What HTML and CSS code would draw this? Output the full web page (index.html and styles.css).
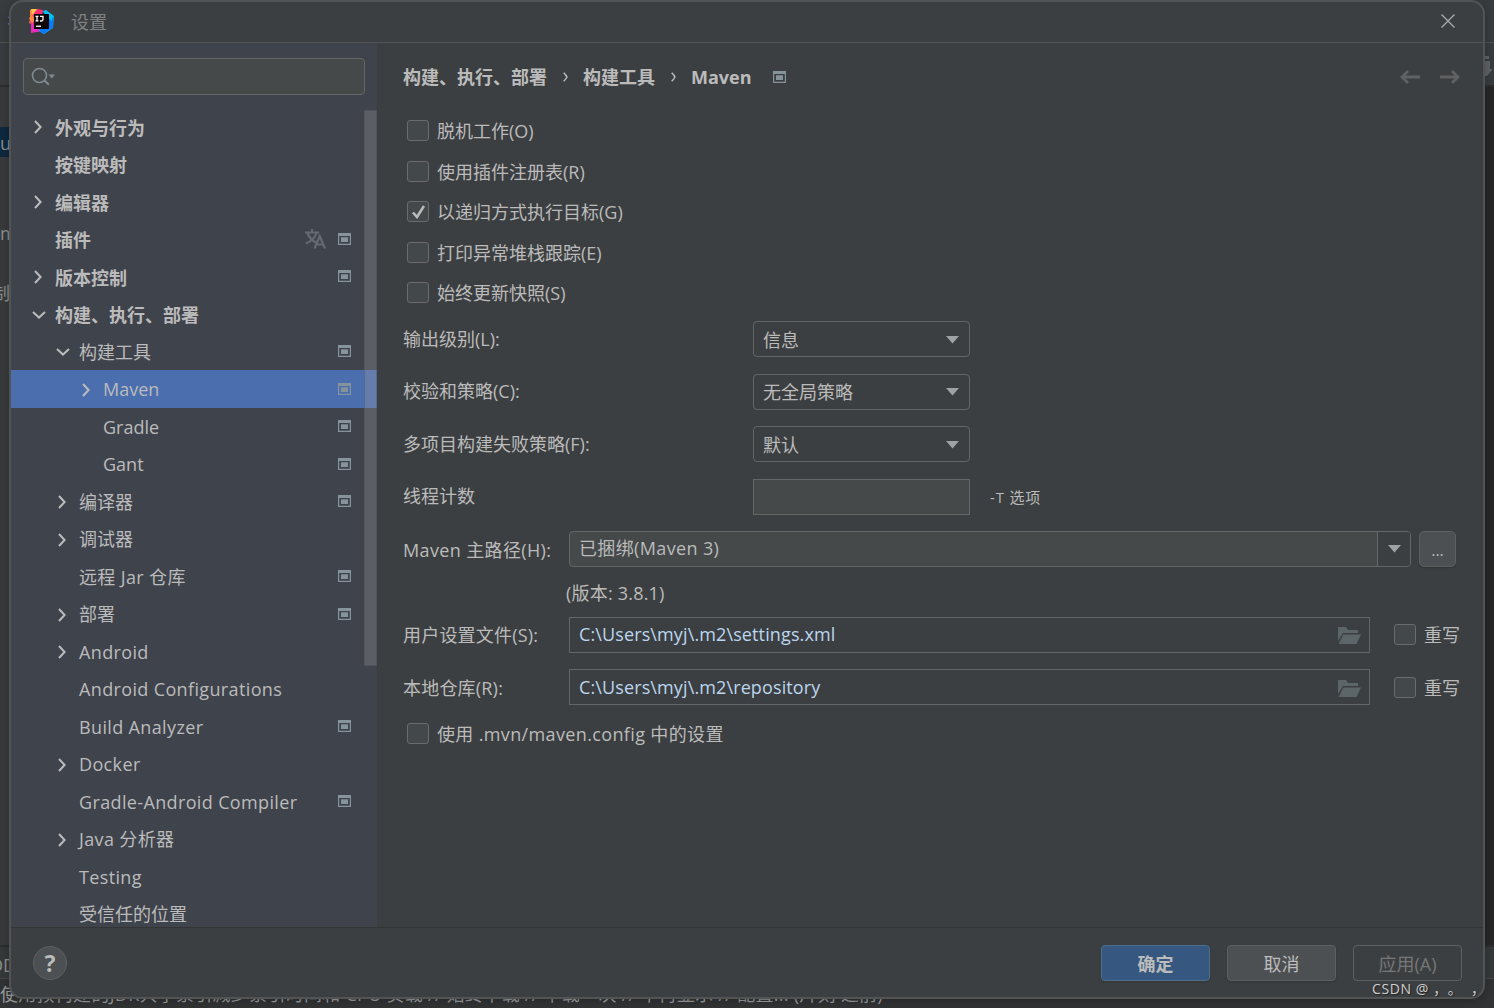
FILE: index.html
```html
<!DOCTYPE html>
<html lang="zh-CN">
<head>
    <meta charset="UTF-8">
    <meta name="viewport" content="width=device-width, initial-scale=1.0">
    <title>设置</title>
    <link rel="stylesheet" href="styles.css">
</head>
<body>

    <!-- Shared icons -->
    <svg class="sprite" width="0" height="0">
        <symbol id="i-right" viewBox="0 0 8 14"><path d="M1 1l5.600 6L1 13" fill="none" stroke="currentColor" stroke-width="2"/></symbol>
        <symbol id="i-down" viewBox="0 0 14 8"><path d="M1 1l6 5.600L13 1" fill="none" stroke="currentColor" stroke-width="2"/></symbol>
        <symbol id="i-project" viewBox="0 0 13 12"><path fill-rule="evenodd" d="M0 0h13v12H0zM1.200 3v7.800h10.600V3z"/><path d="M3 4.300h7V9H3z"/></symbol>
        <symbol id="i-arrow" viewBox="0 0 13 8"><path d="M0 0h13L6.500 7.500z"/></symbol>
        <symbol id="i-folder" viewBox="0 0 23 17"><path d="M0 14V0h8l2 3h10v3H5z"/><path d="M5.300 7.500H23L18.500 17H.6z"/></symbol>
        <symbol id="i-back" viewBox="0 0 20 14"><path d="M20 7H2M8 1L2 7l6 6" fill="none" stroke="currentColor" stroke-width="2.800"/></symbol>
    </svg>

    <!-- IDE window behind the dialog -->
    <div class="ide">
        <div class="ide-title"><span class="ide-link">视</span></div>
        <div class="ide-toolbar">
            <svg class="ide-tool" width="11" height="22"><path d="M2 0h5v3H2zM0 5h8v8h3l-6 7H0z"/></svg>
        </div>
        <div class="ide-main">
            <div class="ide-tree">
                <div class="ide-item ide-item-selected">u</div>
                <div class="ide-item">m</div>
                <div class="ide-item">制</div>
            </div>
            <div class="ide-editor"></div>
        </div>
        <div class="ide-tabs"><span>DD</span></div>
        <div class="ide-status">使用预构建的JDK共享索引减少索引时间和 CPU 负载 // 始终下载 // 下载一次 // 不再显示 // 配置... (片刻 之前)</div>
    </div>

    <div class="dialog">
        <div class="titlebar">
            <svg class="logo" width="25" height="25" viewBox="0 0 25 25">
                <path fill="#fc8a3d" d="M1 1l7-1 5 5-7 11-6-2 2-4-1-3z"/>
                <path fill="#fdc94f" d="M2 0h6l2 4-6 3z"/>
                <path fill="#fe2d76" d="M8 0l6 1-1 5-9 10-4-4 3-5z"/>
                <path fill="#fc8a3d" d="M0 9l3-3 3 4-3 5z"/>
                <path fill="#e62db8" d="M2 13l8 6 4 3-12 2z"/>
                <path fill="#08b8f4" d="M14 2l3-1 8 6-1 12-9 6-5-3 6-16z"/>
                <path fill="#087cfa" d="M20 7l4 2v10l-10 6-4-4z"/>
                <path fill="#07c3f2" d="M16 1l7 5v6l-6-5z"/>
                <path fill="#100609" d="M5 5h15v15H5z"/>
                <path fill="none" stroke="#fff" stroke-width="1.300" d="M6.500 7.300h3M8 7v5M6.500 11.900h3M11 7.300h3v3q0 1.700-1.700 1.700H11"/>
                <path fill="#ddd" d="M7 16.500h5v1.500H7z"/>
            </svg>
            <span class="title">设置</span>
            <svg class="close" width="14" height="14" viewBox="0 0 14 14"><path d="M.5.5l13 13M13.500.5l-13 13" fill="none" stroke="#a9abac" stroke-width="1.300"/></svg>
        </div>

        <div class="body">
            <div class="sidebar">
                <div class="search">
                    <svg width="25" height="19" viewBox="0 0 25 19"><circle cx="8.500" cy="8.500" r="7" fill="none" stroke="#7f8b91" stroke-width="1.600"/><path d="M13 13l4.800 4.800" stroke="#7f8b91" stroke-width="2"/><path d="M17.500 7.500H24l-3.200 4z" fill="#7f8b91"/></svg>
                </div>
                <div class="tree-wrap">
                    <div class="tree">
                        <div class="node bold"><i><svg class="right"><use href="#i-right"/></svg></i><span>外观与行为</span></div>
                        <div class="node bold"><i></i><span>按键映射</span></div>
                        <div class="node bold"><i><svg class="right"><use href="#i-right"/></svg></i><span>编辑器</span></div>
                        <div class="node bold"><i></i><span>插件</span>
                            <svg class="lang" width="21" height="20" viewBox="0 0 21 20"><path d="M0 3.500h14M7 0v3.500M2.500 4c1.500 4 4.500 7.500 8.500 9.500M11.500 4C10 8.500 6 12.500.8 14.500M9.500 19.500L14.700 7l5.300 12.500M11.200 15.500h7" fill="none" stroke="currentColor" stroke-width="2.200"/></svg>
                            <svg class="project"><use href="#i-project"/></svg></div>
                        <div class="node bold"><i><svg class="right"><use href="#i-right"/></svg></i><span>版本控制</span><svg class="project"><use href="#i-project"/></svg></div>
                        <div class="node bold"><i><svg class="down"><use href="#i-down"/></svg></i><span>构建、执行、部署</span></div>
                        <div class="node level2"><i><svg class="down"><use href="#i-down"/></svg></i><span>构建工具</span><svg class="project"><use href="#i-project"/></svg></div>
                        <div class="node level3 selected"><i><svg class="right"><use href="#i-right"/></svg></i><span>Maven</span><svg class="project"><use href="#i-project"/></svg></div>
                        <div class="node level3"><i></i><span>Gradle</span><svg class="project"><use href="#i-project"/></svg></div>
                        <div class="node level3"><i></i><span>Gant</span><svg class="project"><use href="#i-project"/></svg></div>
                        <div class="node level2"><i><svg class="right"><use href="#i-right"/></svg></i><span>编译器</span><svg class="project"><use href="#i-project"/></svg></div>
                        <div class="node level2"><i><svg class="right"><use href="#i-right"/></svg></i><span>调试器</span></div>
                        <div class="node level2"><i></i><span class="wide">远程 Jar 仓库</span><svg class="project"><use href="#i-project"/></svg></div>
                        <div class="node level2"><i><svg class="right"><use href="#i-right"/></svg></i><span>部署</span><svg class="project"><use href="#i-project"/></svg></div>
                        <div class="node level2"><i><svg class="right"><use href="#i-right"/></svg></i><span class="wide">Android</span></div>
                        <div class="node level2"><i></i><span class="wide">Android Configurations</span></div>
                        <div class="node level2"><i></i><span class="wide">Build Analyzer</span><svg class="project"><use href="#i-project"/></svg></div>
                        <div class="node level2"><i><svg class="right"><use href="#i-right"/></svg></i><span class="wide">Docker</span></div>
                        <div class="node level2"><i></i><span class="wide">Gradle-Android Compiler</span><svg class="project"><use href="#i-project"/></svg></div>
                        <div class="node level2"><i><svg class="right"><use href="#i-right"/></svg></i><span class="wide">Java 分析器</span></div>
                        <div class="node level2"><i></i><span class="wide">Testing</span></div>
                        <div class="node level2"><i></i><span>受信任的位置</span></div>
                    </div>
                    <div class="scrollbar"></div>
                </div>
            </div>

            <div class="content">
                <div class="breadcrumb">
                    <span>构建、执行、部署</span>
                    <svg class="sep" width="5" height="10" viewBox="0 0 5 10"><path d="M.7.7Q3 3 4 5 3 7 .7 9.300" fill="none" stroke="#bbb" stroke-width="1.500"/></svg>
                    <span>构建工具</span>
                    <svg class="sep" width="5" height="10" viewBox="0 0 5 10"><path d="M.7.7Q3 3 4 5 3 7 .7 9.300" fill="none" stroke="#bbb" stroke-width="1.500"/></svg>
                    <span class="crumb-last">Maven</span>
                    <svg class="project"><use href="#i-project"/></svg>
                    <div class="history">
                        <svg width="20" height="14"><use href="#i-back"/></svg>
                        <svg class="forward" width="20" height="14"><use href="#i-back"/></svg>
                    </div>
                </div>

                <div class="checks">
                    <label class="check"><b></b><span>脱机工作(O)</span></label>
                    <label class="check"><b></b><span>使用插件注册表(R)</span></label>
                    <label class="check"><b><svg width="13" height="14" viewBox="0 0 13 14"><path d="M1 7.500l4 4.500L12 1" fill="none" stroke="#bbb" stroke-width="2.600"/></svg></b><span>以递归方式执行目标(G)</span></label>
                    <label class="check"><b></b><span>打印异常堆栈跟踪(E)</span></label>
                    <label class="check"><b></b><span>始终更新快照(S)</span></label>
                </div>

                <div class="field">
                    <span class="name">输出级别(L):</span>
                    <div class="select"><span>信息</span><svg class="arrow"><use href="#i-arrow"/></svg></div>
                </div>
                <div class="field">
                    <span class="name">校验和策略(C):</span>
                    <div class="select"><span>无全局策略</span><svg class="arrow"><use href="#i-arrow"/></svg></div>
                </div>
                <div class="field">
                    <span class="name">多项目构建失败策略(F):</span>
                    <div class="select"><span>默认</span><svg class="arrow"><use href="#i-arrow"/></svg></div>
                </div>
                <div class="field">
                    <span class="name">线程计数</span>
                    <div class="threads"></div>
                    <span class="hint">-T 选项</span>
                </div>

                <div class="path">
                    <span class="name wide">Maven 主路径(H):</span>
                    <div class="combo"><span class="wide">已捆绑(Maven 3)</span><div class="drop"><svg class="arrow"><use href="#i-arrow"/></svg></div></div>
                    <div class="browse">...</div>
                </div>
                <div class="version">(版本: 3.8.1)</div>
                <div class="path">
                    <span class="name">用户设置文件(S):</span>
                    <div class="file"><span>C:\Users\myj\.m2\settings.xml</span><svg class="folder"><use href="#i-folder"/></svg></div>
                    <label class="check override"><b></b><span>重写</span></label>
                </div>
                <div class="path">
                    <span class="name">本地仓库(R):</span>
                    <div class="file"><span>C:\Users\myj\.m2\repository</span><svg class="folder"><use href="#i-folder"/></svg></div>
                    <label class="check override"><b></b><span>重写</span></label>
                </div>
                <div class="checks">
                    <label class="check"><b></b><span class="wide">使用 .mvn/maven.config 中的设置</span></label>
                </div>
            </div>
        </div>

        <div class="footer">
            <div class="help">?</div>
            <div class="button primary">确定</div>
            <div class="button">取消</div>
            <div class="button disabled">应用(A)</div>
        </div>
    </div>

    <div class="watermark">CSDN @ ，。&nbsp;&nbsp;，</div>

</body>
</html>
```
FILE: styles.css
```css
* {
    box-sizing: border-box;
}
body {
    margin: 0;
    width: 1494px;
    height: 1008px;
    position: relative;
    overflow: hidden;
    background-color: #313335;
    color: #bbbbbb;
    font-family: "Open Sans", "Noto Sans CJK SC", sans-serif;
    font-size: 18px;
    line-height: 24px;
    white-space: nowrap;
}
svg {
    display: block;
    flex: none;
    fill: currentColor;
}
.sprite {
    position: absolute;
}

/* window behind the dialog */
.ide {
    display: flex;
    flex-direction: column;
    height: 1008px;
    overflow: hidden;
    color: #8c8e90;
}
.ide-title {
    height: 43px;
    padding: 10px 0 0 7px;
    background-color: #393c3e;
    border-bottom: 1px solid #515151;
}
.ide-link {
    color: #56799a;
}
.ide-toolbar {
    display: flex;
    justify-content: flex-end;
    height: 44px;
    padding: 13px 1px 0 0;
    background-color: #393c3e;
    border-bottom: 2px solid #2c2d2e;
}
.ide-tool {
    color: #606263;
}
.ide-main {
    display: flex;
    height: 858px;
}
.ide-tree {
    width: 20px;
    padding-top: 40px;
    background-color: #383a3b;
}
.ide-item {
    height: 30px;
    margin-bottom: 60px;
    line-height: 32px;
}
.ide-item-selected {
    background-color: #0d293e;
}
.ide-item + .ide-item + .ide-item {
    margin-top: -30px;
    text-indent: -8px;
}
.ide-editor {
    flex: 1;
    background-color: #262626;
}
.ide-tabs {
    height: 34px;
    padding-top: 6px;
    background-color: #36393a;
    border-top: 2px solid #2c2d2e;
    border-bottom: 1px solid #454748;
    text-indent: -10px;
}
.ide-status {
    height: 29px;
    padding-top: 3px;
    background-color: #313334;
    color: #9b9d9e;
    letter-spacing: 0.28px;
}

/* dialog */
.dialog {
    position: absolute;
    left: 9px;
    top: 0;
    display: flex;
    flex-direction: column;
    width: 1476px;
    height: 999px;
    border: 2px solid #515354;
    border-radius: 14px;
    overflow: hidden;
    background-color: #3c3f41;
    box-shadow: 0 2px 10px rgba(0, 0, 0, 0.25);
}
.titlebar {
    display: flex;
    align-items: center;
    height: 41px;
    padding: 0 28px 2px 18px;
    border-bottom: 1px solid #515354;
}
.title {
    flex: 1;
    padding-top: 2px;
    margin-left: 17px;
    color: #7f8182;
}
.body {
    display: flex;
    height: 884px;
}
.sidebar {
    flex: none;
    width: 366px;
    overflow: hidden;
    background-color: #3f434c;
}
.search {
    display: flex;
    align-items: center;
    width: 342px;
    height: 37px;
    margin: 15px 0 0 12px;
    padding-left: 7px;
    border: 1px solid #646666;
    border-radius: 4px;
    background-color: #45494a;
}
.tree-wrap {
    position: relative;
    margin-top: 12.5px;
}
.node {
    display: flex;
    align-items: center;
    height: 37.5px;
    padding: 0 26px 0 22px;
}
.node i {
    flex: none;
    width: 22px;
    padding-top: 2px;
}
.node span {
    flex: 1;
    padding-top: 1px;
}
.node.bold span {
    padding-top: 3px;
}
.bold {
    font-weight: bold;
}
.level2 {
    padding-left: 46px;
}
.level3 {
    padding-left: 70px;
}
.selected {
    background-color: #4b6eaf;
}
.wide {
    letter-spacing: 0.36px;
}
.right {
    width: 8px;
    height: 14px;
    margin-left: 1px;
}
.down {
    width: 14px;
    height: 8px;
    margin-left: -1px;
}
.project {
    width: 13px;
    height: 12px;
    color: #87939a;
}
.lang {
    margin-right: 12px;
    color: #646a72;
}
.scrollbar {
    position: absolute;
    top: 2.5px;
    right: 0;
    width: 13px;
    height: 556px;
    border: 1px solid rgba(60, 63, 65, 0.3);
    background-color: rgba(166, 166, 166, 0.28);
}

/* settings page */
.content {
    flex: 1;
    padding: 15px 28px 0 26px;
}
.breadcrumb {
    display: flex;
    align-items: center;
    height: 38px;
    margin-bottom: 14.5px;
    font-weight: bold;
}
.sep {
    margin: 0 15px 0 16px;
}
.crumb-last {
    margin-right: 21px;
}
.history {
    display: flex;
    gap: 20px;
    margin-left: auto;
    color: #5f6162;
}
.forward {
    transform: scaleX(-1);
}
.checks {
    padding-left: 4px;
}
.check {
    display: flex;
    align-items: center;
    height: 40.5px;
}
.check b {
    display: flex;
    align-items: center;
    justify-content: center;
    width: 22px;
    height: 21px;
    margin-right: 8px;
    border: 1px solid #6b6b6b;
    border-radius: 3px;
    background-color: #43494a;
}
.check span {
    padding-top: 1px;
}
.field {
    display: flex;
    align-items: center;
    height: 52.5px;
}
.name {
    width: 350px;
    padding-bottom: 1px;
}
.select, .threads {
    display: flex;
    align-items: center;
    justify-content: space-between;
    width: 217px;
    height: 36px;
    padding: 1px 10px 0 9px;
    border: 1px solid #646666;
    border-radius: 4px;
}
.threads {
    border-radius: 0;
    background-color: #45494a;
}
.arrow {
    width: 13px;
    height: 8px;
    color: #9fa2a4;
}
.hint {
    margin-left: 20px;
    font-size: 15px;
    letter-spacing: 0.8px;
}
.path {
    display: flex;
    align-items: center;
    height: 52.5px;
}
.path .name {
    flex: none;
    width: 166px;
    padding-top: 2px;
}
.path .name:not(.wide) {
    letter-spacing: 0.2px;
}
.combo {
    display: flex;
    flex: none;
    width: 842px;
    height: 36px;
    border: 1px solid #646666;
    border-radius: 4px;
    background-color: #45494a;
}
.combo span {
    flex: 1;
    padding: 4px 0 0 9px;
}
.drop {
    display: flex;
    align-items: center;
    justify-content: center;
    width: 33px;
    border-left: 1px solid #646666;
    border-radius: 0 3px 3px 0;
    background-color: #3c3f41;
}
.browse {
    flex: none;
    width: 37px;
    height: 36px;
    margin-left: 8px;
    border: 1px solid #5e6060;
    border-radius: 5px;
    background-color: #4c5052;
    box-shadow: 0 1px 1px rgba(0, 0, 0, 0.2);
    font-size: 16px;
    line-height: 36px;
    text-align: center;
}
.version {
    height: 33px;
    padding: 5px 0 0 163px;
    letter-spacing: 0.2px;
}
.file {
    display: flex;
    flex: none;
    align-items: center;
    justify-content: space-between;
    width: 801px;
    height: 36px;
    padding: 0 8px 1px 9px;
    border: 1px solid #646666;
    color: #bbd6ee;
    letter-spacing: 0.12px;
}
.folder {
    width: 23px;
    height: 17px;
    margin-top: 3px;
    color: #5c6568;
}
.override {
    margin-left: 24px;
}

/* bottom bar */
.footer {
    display: flex;
    align-items: center;
    height: 70px;
    padding: 0 21px 0 22px;
    border-top: 1px solid #323435;
}
.help {
    width: 34px;
    height: 34px;
    margin-right: auto;
    border: 1px solid #5e6060;
    border-radius: 50%;
    background-color: #4c5052;
    font-size: 23px;
    font-weight: bold;
    line-height: 32px;
    text-align: center;
}
.button {
    width: 109px;
    height: 36px;
    margin-left: 17px;
    border: 1px solid #5e6060;
    border-radius: 4px;
    background-color: #4c5052;
    box-shadow: 0 1px 2px rgba(0, 0, 0, 0.15);
    line-height: 37px;
    text-align: center;
}
.primary {
    border-color: #4c708c;
    background-color: #365880;
    font-weight: bold;
}
.disabled {
    background-color: transparent;
    box-shadow: none;
    color: #777777;
}
.watermark {
    position: absolute;
    left: 1372px;
    top: 977px;
    color: #d0d0d0;
    font-size: 14px;
    letter-spacing: 0.6px;
    text-shadow: 1px 1px 1px #222222;
    text-spacing-trim: space-all;
}
```
